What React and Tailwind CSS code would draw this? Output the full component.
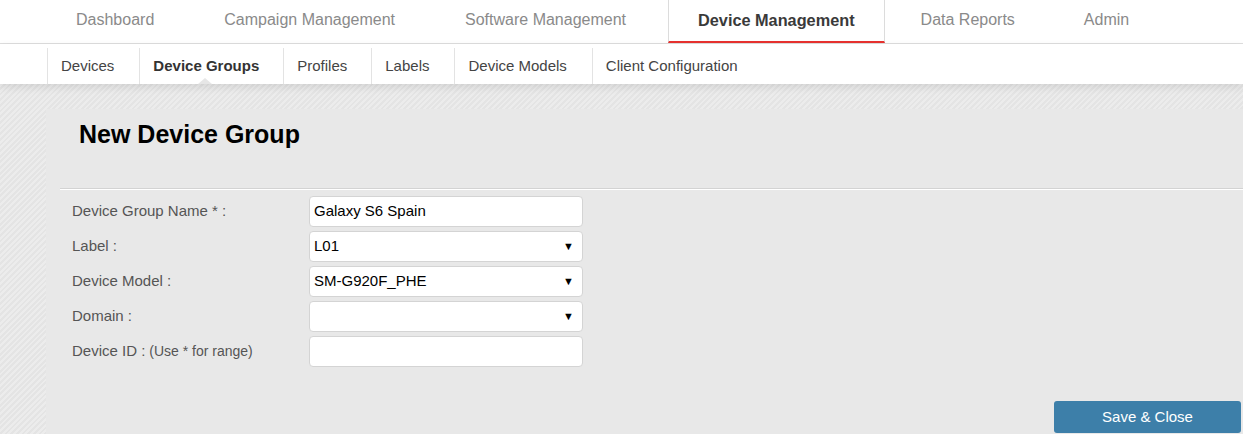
import React from 'react'

const topNav = [
  ['Dashboard', 'pl-[35px] pr-[35px]'],
  ['Campaign Management', 'pl-[35px] pr-[35px]'],
  ['Software Management', 'pl-[35px] pr-[42px]'],
]
const topNavRight = [
  ['Data Reports', 'pl-[36px] pr-[35px]'],
  ['Admin', 'pl-[34px] pr-[35px]'],
]
const subNav = [
  ['Devices', 'pr-[25px]'],
  ['Device Groups', 'pr-[24px] font-bold text-[#333]'],
  ['Profiles', 'pr-[24px]'],
  ['Labels', 'pr-[25px]'],
  ['Device Models', 'pr-[25px]'],
  ['Client Configuration', 'pr-[25px]'],
]

const rows = [
  ['Device Group Name * :', 'Galaxy S6 Spain', false],
  ['Label :', 'L01', true],
  ['Device Model :', 'SM-G920F_PHE', true],
  ['Domain :', '', true],
  ['Device ID :', '', false],
]

export default function App() {
  return (
    <div className="min-h-screen font-['Liberation_Sans',Arial,sans-serif] bg-[repeating-linear-gradient(-45deg,#ececec_0px,#ececec_2px,#e4e4e4_2px,#e4e4e4_4px)]">
      {/* top nav */}
      <nav className="h-[44px] bg-white border-b border-[#dedede] flex pl-[41px] text-[16px] text-[#8a8a8a]">
        {topNav.map(([t, p]) => (
          <div key={t} className={`flex items-center h-full pb-[3px] ${p}`}>{t}</div>
        ))}
        <div className="flex items-center h-full px-[29px] pb-[1px] border-x border-[#dcdcdc] border-b-[2px] border-b-[#e8322f] font-bold text-[#3a3a3a] text-[16.3px]">
          Device Management
        </div>
        {topNavRight.map(([t, p]) => (
          <div key={t} className={`flex items-center h-full pb-[3px] ${p}`}>{t}</div>
        ))}
      </nav>

      {/* sub nav */}
      <div className="relative z-10 h-[40px] bg-white flex items-end pl-[47px] text-[15px] text-[#444] shadow-[0_3px_8px_rgba(0,0,0,0.10)]">
        {subNav.map(([t, cls]) => (
          <div key={t} className={`relative h-[36px] flex items-center border-l border-[#e3e3e3] pl-[13px] ${cls}`}>
            {t}
            {t === 'Device Groups' && (
              <span className="absolute bottom-0 left-[58px] w-0 h-0 border-x-[7px] border-x-transparent border-b-[6px] border-b-[#e6e6e6]" />
            )}
          </div>
        ))}
      </div>

      {/* content */}
      <div className="pt-[25px] pl-[46px]">
        <div className="bg-[#e8e8e8] h-[325px]">
          <h1 className="pl-[33px] pt-[10px] text-[25px] leading-[30px] font-bold text-black">New Device Group</h1>
          <div className="ml-[14px] mt-[39px] border-t border-[#d3d3d3]">
            <div className="h-[1px] bg-white" />
          </div>

          <div className="pt-[6px] flex flex-col gap-[4px]">
            {rows.map(([label, value, select], i) => (
              <div key={i} className="flex items-center h-[31px]">
                <div className="w-[263px] pl-[26px] text-[15px] text-[#555]">
                  {label}
                  {i === 4 && <span className="text-[14px]"> (Use * for range)</span>}
                </div>
                <div className="w-[274px] h-[31px] bg-white border border-[#d4d4d4] rounded-[4px] flex items-center pl-[4px] pr-[8px] text-[15px] text-black">
                  <span className="flex-1">{value}</span>
                  {select && <span className="text-[11px] text-black">▼</span>}
                </div>
              </div>
            ))}
          </div>

          <div className="flex justify-end pr-[2px] mt-[34px]">
            <button className="w-[187px] h-[32px] rounded-[3px] bg-[#3d7fa9] text-white text-[15px]">
              Save &amp; Close
            </button>
          </div>
        </div>
      </div>
    </div>
  )
}
